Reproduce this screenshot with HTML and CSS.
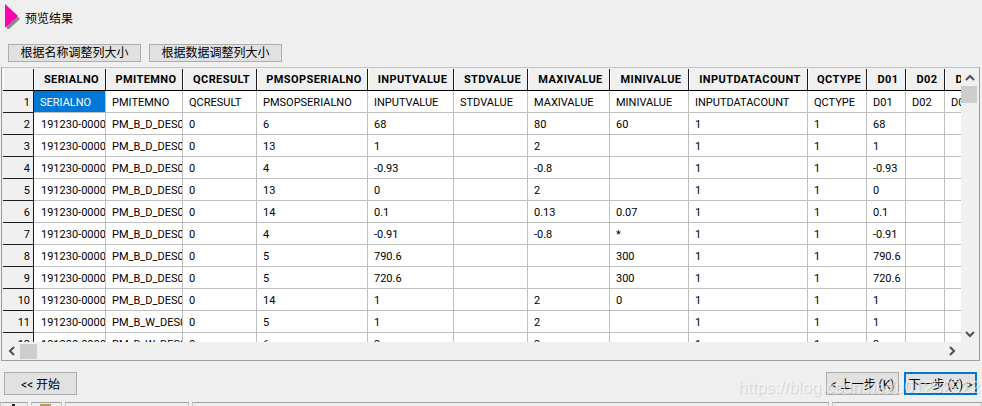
FILE: index.html
```html
<!DOCTYPE html>
<html lang="zh-CN">
<head>
  <meta charset="UTF-8">
  <title>预览结果</title>
  <link rel="stylesheet" href="styles.css">
</head>
<body>
  <div class="page">
    <!-- Title -->
    <div class="title-row">
      <svg class="title-arrow" width="15" height="25" viewBox="0 0 15 25">
        <polygon points="2,3 15,15 4,25 2,25" fill="#8a8a8a"/>
        <polygon points="0,0 13,12 0,24" fill="#ff00b0"/>
      </svg>
      <span class="title-text">预览结果</span>
    </div>

    <div class="toolbar">
      <button class="btn btn-fit">根据名称调整列大小</button>
      <button class="btn btn-fit">根据数据调整列大小</button>
    </div>

    <!-- Grid -->
    <div class="grid-frame">
      <div class="grid-main">
        <div class="grid-clip">
          <table class="grid">
            <colgroup>
              <col class="c-gutter"><col class="c-serial"><col class="c-item"><col class="c-result"><col class="c-sop">
              <col class="c-input"><col class="c-std"><col class="c-max"><col class="c-min"><col class="c-count">
              <col class="c-type"><col class="c-d"><col class="c-d"><col class="c-d">
            </colgroup>
            <thead>
              <tr>
                <th></th><th>SERIALNO</th><th>PMITEMNO</th><th>QCRESULT</th><th>PMSOPSERIALNO</th>
                <th>INPUTVALUE</th><th>STDVALUE</th><th>MAXIVALUE</th><th>MINIVALUE</th><th>INPUTDATACOUNT</th>
                <th>QCTYPE</th><th>D01</th><th>D02</th><th>D03</th>
              </tr>
            </thead>
            <tbody>
              <tr>
                <th>1</th><td class="selected">SERIALNO</td><td>PMITEMNO</td><td>QCRESULT</td><td>PMSOPSERIALNO</td>
                <td>INPUTVALUE</td><td>STDVALUE</td><td>MAXIVALUE</td><td>MINIVALUE</td><td>INPUTDATACOUNT</td>
                <td>QCTYPE</td><td>D01</td><td>D02</td><td>D03</td>
              </tr>
              <tr>
                <th>2</th><td>191230-0000</td><td>PM_B_D_DES0</td><td>0</td><td>6</td>
                <td>68</td><td></td><td>80</td><td>60</td><td>1</td>
                <td>1</td><td>68</td><td></td><td></td>
              </tr>
              <tr>
                <th>3</th><td>191230-0000</td><td>PM_B_D_DES0</td><td>0</td><td>13</td>
                <td>1</td><td></td><td>2</td><td></td><td>1</td>
                <td>1</td><td>1</td><td></td><td></td>
              </tr>
              <tr>
                <th>4</th><td>191230-0000</td><td>PM_B_D_DES0</td><td>0</td><td>4</td>
                <td>-0.93</td><td></td><td>-0.8</td><td></td><td>1</td>
                <td>1</td><td>-0.93</td><td></td><td></td>
              </tr>
              <tr>
                <th>5</th><td>191230-0000</td><td>PM_B_D_DES0</td><td>0</td><td>13</td>
                <td>0</td><td></td><td>2</td><td></td><td>1</td>
                <td>1</td><td>0</td><td></td><td></td>
              </tr>
              <tr>
                <th>6</th><td>191230-0000</td><td>PM_B_D_DES0</td><td>0</td><td>14</td>
                <td>0.1</td><td></td><td>0.13</td><td>0.07</td><td>1</td>
                <td>1</td><td>0.1</td><td></td><td></td>
              </tr>
              <tr>
                <th>7</th><td>191230-0000</td><td>PM_B_D_DES0</td><td>0</td><td>4</td>
                <td>-0.91</td><td></td><td>-0.8</td><td>*</td><td>1</td>
                <td>1</td><td>-0.91</td><td></td><td></td>
              </tr>
              <tr>
                <th>8</th><td>191230-0000</td><td>PM_B_D_DES0</td><td>0</td><td>5</td>
                <td>790.6</td><td></td><td></td><td>300</td><td>1</td>
                <td>1</td><td>790.6</td><td></td><td></td>
              </tr>
              <tr>
                <th>9</th><td>191230-0000</td><td>PM_B_D_DES0</td><td>0</td><td>5</td>
                <td>720.6</td><td></td><td></td><td>300</td><td>1</td>
                <td>1</td><td>720.6</td><td></td><td></td>
              </tr>
              <tr>
                <th>10</th><td>191230-0000</td><td>PM_B_D_DES0</td><td>0</td><td>14</td>
                <td>1</td><td></td><td>2</td><td>0</td><td>1</td>
                <td>1</td><td>1</td><td></td><td></td>
              </tr>
              <tr>
                <th>11</th><td>191230-0000</td><td>PM_B_W_DES0</td><td>0</td><td>5</td>
                <td>1</td><td></td><td>2</td><td></td><td>1</td>
                <td>1</td><td>1</td><td></td><td></td>
              </tr>
              <tr>
                <th>12</th><td>191230-0000</td><td>PM_B_W_DES0</td><td>0</td><td>6</td>
                <td>3</td><td></td><td>3</td><td></td><td>1</td>
                <td>1</td><td>3</td><td></td><td></td>
              </tr>
            </tbody>
          </table>
        </div>
        <!-- Vertical scrollbar -->
        <div class="vscroll">
          <div class="arrow-box">
            <svg width="10" height="8" viewBox="0 0 10 8"><polyline points="1,6 5,2 9,6" class="chevron"/></svg>
          </div>
          <div class="vthumb"></div>
          <div class="spacer"></div>
          <div class="arrow-box">
            <svg width="10" height="8" viewBox="0 0 10 8"><polyline points="1,2 5,6 9,2" class="chevron"/></svg>
          </div>
        </div>
      </div>
      <!-- Horizontal scrollbar -->
      <div class="hscroll">
        <div class="arrow-box-h">
          <svg width="8" height="10" viewBox="0 0 8 10"><polyline points="6,1 2,5 6,9" class="chevron"/></svg>
        </div>
        <div class="hthumb"></div>
        <div class="spacer"></div>
        <div class="arrow-box-h">
          <svg width="8" height="10" viewBox="0 0 8 10"><polyline points="2,1 6,5 2,9" class="chevron"/></svg>
        </div>
      </div>
    </div>

    <!-- Wizard buttons -->
    <div class="wizard">
      <button class="btn btn-nav">&lt;&lt; 开始</button>
      <div class="spacer"></div>
      <button class="btn btn-nav">&lt; 上一步 (K)</button>
      <button class="btn btn-nav btn-default">下一步 (X) &gt;</button>
    </div>

    <!-- Status bar -->
    <div class="statusbar">
      <div class="seg seg-a"><span class="mark-dark"></span></div>
      <div class="seg seg-b"><span class="mark-tan"></span></div>
      <div class="seg seg-c"></div>
      <div class="seg seg-d"></div>
      <div class="seg seg-e"></div>
    </div>

    <div class="watermark">https://blog.csdn.net/u012525224</div>
  </div>
</body>
</html>
```

FILE: styles.css
```css
/* Global */
html, body {
  margin: 0;
  padding: 0;
}
body {
  font-family: Roboto, "Liberation Sans", "Noto Sans CJK SC", sans-serif;
  font-size: 11px;
  color: #000;
  background-color: #efefef;
}
.page {
  position: relative;
  height: 406px;
  overflow: hidden;
  display: flex;
  flex-direction: column;
  background-color: #efefef;
}
.spacer {
  flex: 1;
}

/* Title */
.title-row {
  height: 44px;
  flex-shrink: 0;
  display: flex;
  align-items: flex-start;
  padding-left: 5px;
  box-sizing: border-box;
}
.title-arrow {
  margin-top: 4px;
}
.title-text {
  margin: 9px 0 0 5px;
  font-size: 12px;
  line-height: 17px;
  font-family: "Noto Sans CJK SC", sans-serif;
}

/* Buttons */
.btn {
  font-family: Roboto, "Noto Sans CJK SC", sans-serif;
  font-size: 12px;
  padding: 0;
  color: #000;
  background-color: #e1e1e1;
  border: 1px solid #adadad;
  box-sizing: border-box;
}
.toolbar {
  display: flex;
  gap: 8px;
  padding-left: 8px;
  height: 18px;
  flex-shrink: 0;
}
.btn-fit {
  width: 133px;
  height: 18px;
  line-height: 15px;
}

/* Grid frame */
.grid-frame {
  margin: 5px 2px 0 1px;
  height: 294px;
  flex-shrink: 0;
  box-sizing: border-box;
  border: 1px solid #a0a0a0;
  border-top-color: #c4c4c4;
  padding: 1px 1px 0 1px;
  display: flex;
  flex-direction: column;
}
.grid-main {
  display: flex;
  height: 273px;
}
.grid-clip {
  width: 959px;
  height: 273px;
  overflow: hidden;
  background-color: #fff;
}
.grid {
  table-layout: fixed;
  width: 981px;
  border-collapse: separate;
  border-spacing: 0;
}
.c-gutter { width: 31px; }
.c-serial { width: 72px; }
.c-item { width: 77px; }
.c-result { width: 74px; }
.c-sop { width: 111px; }
.c-input { width: 86px; }
.c-std { width: 74px; }
.c-max { width: 82px; }
.c-min { width: 79px; }
.c-count { width: 119px; }
.c-type { width: 59px; }
.c-d { width: 39px; }

.grid th,
.grid td {
  height: 22px;
  box-sizing: border-box;
  padding: 0;
  overflow: hidden;
  white-space: nowrap;
  font-size: 11px;
  font-weight: normal;
}
.grid td {
  padding: 1px 0 0 6px;
  border-right: 1px solid #bfbfbf;
  border-bottom: 1px solid #bfbfbf;
}
.grid td:nth-child(2) {
  padding-left: 7px;
}
.grid td.selected {
  background-color: #0078d7;
  color: #fff;
  padding-left: 6px;
}
.grid thead th {
  height: 22px;
  padding: 0 0 1px 4px;
  font-weight: bold;
  letter-spacing: 0.4px;
  text-align: center;
  background-color: #f0f0f0;
  border-right: 1px solid #1c1c1c;
  border-bottom: 1px solid #000;
  box-shadow: inset 1px 0 0 #fff;
}
.grid tbody th {
  text-align: right;
  padding: 1px 3px 0 0;
  background-color: #f0f0f0;
  border-right: 1px solid #1c1c1c;
  border-bottom: 1px solid #1c1c1c;
}

/* Scrollbars */
.vscroll {
  width: 17px;
  display: flex;
  flex-direction: column;
  background-color: #f0f0f0;
}
.arrow-box {
  height: 17px;
  display: flex;
  align-items: center;
  justify-content: center;
}
.vthumb {
  height: 17px;
  background-color: #cdcdcd;
  margin: 0 1px 0 0;
}
.hscroll {
  height: 18px;
  display: flex;
  align-items: center;
  background-color: #f0f0f0;
  padding-right: 18px;
}
.arrow-box-h {
  width: 17px;
  height: 17px;
  display: flex;
  align-items: center;
  justify-content: center;
}
.hthumb {
  width: 17px;
  height: 15px;
  background-color: #cdcdcd;
}
.chevron {
  fill: none;
  stroke: #505050;
  stroke-width: 2;
}

/* Wizard buttons */
.wizard {
  display: flex;
  gap: 5px;
  margin-top: 11px;
  padding: 0 5px 0 4px;
  height: 23px;
  flex-shrink: 0;
}
.btn-nav {
  width: 73px;
  height: 23px;
}
.btn-default {
  border: 2px solid #0078d7;
}

/* Status bar */
.statusbar {
  display: flex;
  gap: 3px;
  margin-top: 7px;
  height: 4px;
  flex-shrink: 0;
}
.seg {
  box-sizing: border-box;
  border-top: 1px solid #a0a0a0;
  border-left: 1px solid #c8c8c8;
  border-right: 1px solid #c8c8c8;
  position: relative;
}
.seg-a { width: 28px; }
.seg-b { width: 31px; }
.seg-c { width: 124px; }
.seg-d { width: 637px; }
.seg-e { flex: 1; }
.mark-dark {
  position: absolute;
  left: 11px;
  top: 1px;
  width: 3px;
  height: 3px;
  background-color: #222;
}
.mark-tan {
  position: absolute;
  left: 8px;
  top: 1px;
  width: 11px;
  height: 3px;
  background-color: #b79a5c;
}

/* Watermark sits over the buttons */
.watermark {
  position: absolute;
  left: 738px;
  top: 376px;
  font-family: "Liberation Sans", sans-serif;
  font-size: 17px;
  line-height: 23px;
  white-space: nowrap;
  color: rgba(255, 255, 255, 0.6);
  text-shadow: 1px 1px 1px rgba(0, 0, 0, 0.14);
}
```
